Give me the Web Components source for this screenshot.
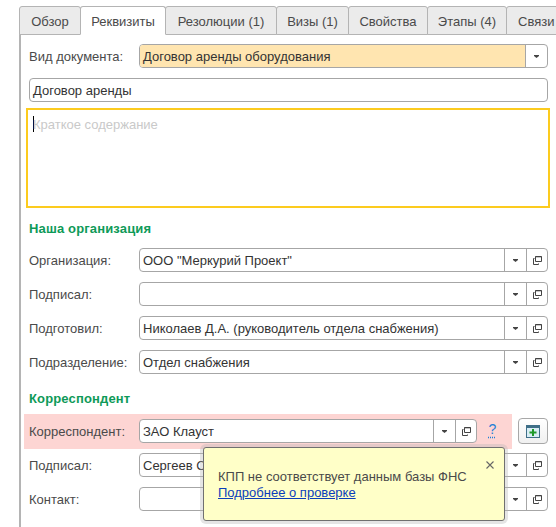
<!DOCTYPE html>
<html lang="ru">
<head>
<meta charset="utf-8">
<title>Реквизиты</title>
<style>
	html, body { margin: 0; height: 100%; background: #fff; overflow: hidden; }
	body { font: 13px "Liberation Sans", Arial, sans-serif; color: #333; }
</style>
</head>
<body>
<doc-form></doc-form>
<script>
// Вкладка
class DocTab extends HTMLElement {
	constructor() {
		super();
		this.attachShadow({ mode: 'open' });
		this.shadowRoot.innerHTML = `
			<style>
				:host {
					display: block;
					flex: none;
					box-sizing: border-box;
					height: 29px;
					margin-right: -1px;
					padding: 7px 0 0;
					text-align: center;
					font-size: 13px;
					line-height: 16px;
					color: #4a4a4a;
					white-space: nowrap;
					background: #ebebeb;
					border: 1px solid #b4b4b4;
					border-radius: 3px 3px 0 0;
				}
				:host([active]) {
					background: #fff;
					border-bottom-color: #fff;
					position: relative;
					z-index: 1;
				}
			</style>
			<slot></slot>
		`;
	}
}

// Заголовок раздела
class DocSection extends HTMLElement {
	constructor() {
		super();
		this.attachShadow({ mode: 'open' });
		this.shadowRoot.innerHTML = `
			<style>
				:host {
					display: block;
					height: 16px;
					line-height: 18px;
					font-weight: bold;
					font-size: 13px;
					letter-spacing: .15px;
					color: #0e9a58;
				}
			</style>
			<slot></slot>
		`;
	}
}

// Поле ввода с кнопками
class DocInput extends HTMLElement {
	constructor() {
		super();
		this.attachShadow({ mode: 'open' });
		const botones = this.getAttribute('buttons') || '';
		let extra = '';
		if (botones.includes('d')) extra += `<span class="btn"><svg width="5" height="3" viewBox="0 0 5 3"><path d="M0 0h5v1L2.500 3 0 1z" fill="#444"/></svg></span>`;
		if (botones.includes('o')) extra += `<span class="btn"><svg width="9" height="9" viewBox="0 0 9 9" fill="none" stroke="#444"><path d="M2.500 5.500V.5h6v5z"/><path d="M2.500.8h6" /><path d="M1.500 2.500H.5v6h5V7.500"/></svg></span>`;
		this.shadowRoot.innerHTML = `
			<style>
				:host {
					display: flex;
					flex: 1;
					min-width: 0;
					box-sizing: border-box;
					height: 24px;
					background: #fff;
					border: 1px solid #a6a6a6;
					border-radius: 4px;
					overflow: hidden;
				}
				.val {
					flex: 1;
					min-width: 0;
					padding: 1px 3px 0;
					line-height: 21px;
					font-size: 13px;
					color: #333;
					white-space: nowrap;
					overflow: hidden;
				}
				:host([highlight]) .val { background: #ffe5b0; }
				.btn {
					flex: none;
					width: 21px;
					border-left: 1px solid #a6a6a6;
					display: flex;
					align-items: center;
					justify-content: center;
				}
				.btn + .btn { width: 20px; }
			</style>
			<div class="val"><slot></slot></div>
			${extra}
		`;
	}
}

// Fila: etiqueta + campo
class DocRow extends HTMLElement {
	constructor() {
		super();
		this.attachShadow({ mode: 'open' });
		this.shadowRoot.innerHTML = `
			<style>
				:host {
					display: flex;
					height: 24px;
				}
				.label {
					flex: none;
					width: 110px;
					padding-top: 2px;
					font-size: 13px;
					line-height: 21px;
					color: #4a4a4a;
					white-space: nowrap;
				}
			</style>
			<span class="label"><slot name="label"></slot></span>
			<slot></slot>
		`;
	}
}

// Всплывающая подсказка
class DocPopup extends HTMLElement {
	constructor() {
		super();
		this.attachShadow({ mode: 'open' });
		this.shadowRoot.innerHTML = `
			<style>
				:host {
					display: block;
					position: absolute;
					left: 203px;
					top: 447px;
					width: 302px;
					height: 74px;
					box-sizing: border-box;
					padding: 21px 14px 0;
					background: #ffffc8;
					border: 1px solid #707070;
					border-radius: 3px;
					box-shadow: 0 0 0 3px rgba(180,180,180,.35);
					font-size: 13px;
					line-height: 16px;
					color: #4a4a4a;
					z-index: 5;
				}
				svg { position: absolute; right: 10px; top: 13px; }
			</style>
			<svg width="8" height="8" viewBox="0 0 8 8" stroke="#666" stroke-width="1.1"><path d="M.5.5l7 7M7.500.5l-7 7"/></svg>
			<slot></slot>
		`;
	}
}

// Formulario completo
class DocForm extends HTMLElement {
	constructor() {
		super();
		this.attachShadow({ mode: 'open' });
		this.shadowRoot.innerHTML = `
			<style>
				:host {
					display: block;
					height: 527px;
					box-sizing: border-box;
					padding: 6px 0 0 19px;
					overflow: hidden;
					position: relative;
				}
				.tabs { display: flex; height: 28px; }
				.panel {
					box-sizing: border-box;
					height: 493px;
					border-top: 1px solid #b4b4b4;
					border-left: 2px solid #b4b4b4;
					padding: 9px 8px 0 8px;
				}
				.memo {
					box-sizing: border-box;
					height: 100px;
					margin: 6px -2px 0 -3px;
					padding: 6px 5px;
					border: 2px solid #fccb1e;
					font-size: 13px;
					line-height: 18px;
					color: #c9c9c9;
				}
				.memo i { display: inline-block; width: 1px; height: 16px; background: #000; vertical-align: top; margin-right: -1px; }
				.gap10 { margin-top: 10px; }
				.head { margin-top: 12px; margin-bottom: 12px; }
				.band {
					display: flex;
					align-items: flex-start;
					gap: 6px;
					margin-top: 8px;
				}
				.pink {
					flex: 1;
					display: flex;
					box-sizing: border-box;
					height: 35px;
					margin-left: -5px;
					padding: 5px 0 0 5px;
					background: #fdd5d3;
				}
				.pink doc-row { flex: 1; }
				.q {
					flex: none;
					box-sizing: border-box;
					width: 35px;
					padding: 2px 4px 0 0;
					text-align: center;
					font-size: 14px;
					color: #1f7fd6;
					text-decoration: underline dotted;
					text-underline-offset: 3px;
				}
				.add {
					flex: none;
					box-sizing: border-box;
					width: 30px;
					height: 26px;
					margin-top: 4px;
					border: 1px solid #a8a8a8;
					border-radius: 4px;
					background: linear-gradient(#fff, #f0f0f0);
					display: flex;
					align-items: center;
					justify-content: center;
				}
				a { color: #0a3dbb; text-decoration: underline; }
				.row-after { margin-top: 4px; }
			</style>
			<div class="tabs">
				<doc-tab style="width:62px">Обзор</doc-tab>
				<doc-tab active style="width:86px">Реквизиты</doc-tab>
				<doc-tab style="width:112px">Резолюции (1)</doc-tab>
				<doc-tab style="width:73px">Визы (1)</doc-tab>
				<doc-tab style="width:80px">Свойства</doc-tab>
				<doc-tab style="width:80px">Этапы (4)</doc-tab>
				<doc-tab style="width:70px;text-align:left;padding-left:11px">Связи</doc-tab>
			</div>
			<div class="panel">
				<doc-row><span slot="label">Вид документа:</span><doc-input highlight buttons="d">Договор аренды оборудования</doc-input></doc-row>
				<doc-row class="gap10"><doc-input style="margin-left:-110px">Договор аренды</doc-input></doc-row>
				<div class="memo"><i></i>Краткое содержание</div>

				<doc-section class="head">Наша организация</doc-section>
				<doc-row><span slot="label">Организация:</span><doc-input buttons="do">ООО "Меркурий Проект"</doc-input></doc-row>
				<doc-row class="gap10"><span slot="label">Подписал:</span><doc-input buttons="do"></doc-input></doc-row>
				<doc-row class="gap10"><span slot="label">Подготовил:</span><doc-input buttons="do">Николаев Д.А. (руководитель отдела снабжения)</doc-input></doc-row>
				<doc-row class="gap10"><span slot="label">Подразделение:</span><doc-input buttons="do">Отдел снабжения</doc-input></doc-row>

				<doc-section class="head" style="margin-top:16px;margin-bottom:0">Корреспондент</doc-section>
				<div class="band">
					<div class="pink">
						<doc-row><span slot="label">Корреспондент:</span><doc-input buttons="do">ЗАО Клауст</doc-input></doc-row>
						<span class="q">?</span>
					</div>
					<span class="add">
						<svg width="14" height="13" viewBox="0 0 14 13">
							<rect x=".5" y=".5" width="13" height="12" fill="#d9edf5" stroke="#3f6f88"/>
							<rect x="1" y="1" width="12" height="2" fill="#3f6f88"/>
							<path d="M6 4h2v2.500h2.500v2H8V11H6V8.500H3.500v-2H6z" fill="#1f9a2a"/>
						</svg>
					</span>
				</div>
				<doc-row class="row-after"><span slot="label">Подписал:</span><doc-input buttons="do">Сергеев С.</doc-input></doc-row>
				<doc-row class="gap10"><span slot="label">Контакт:</span><doc-input buttons="do"></doc-input></doc-row>
			</div>
			<doc-popup>КПП не соответствует данным базы ФНС<br><a href="#">Подробнее о проверке</a></doc-popup>
		`;
	}
}

customElements.define('doc-tab', DocTab);
customElements.define('doc-section', DocSection);
customElements.define('doc-input', DocInput);
customElements.define('doc-row', DocRow);
customElements.define('doc-popup', DocPopup);
customElements.define('doc-form', DocForm);
</script>
</body>
</html>
